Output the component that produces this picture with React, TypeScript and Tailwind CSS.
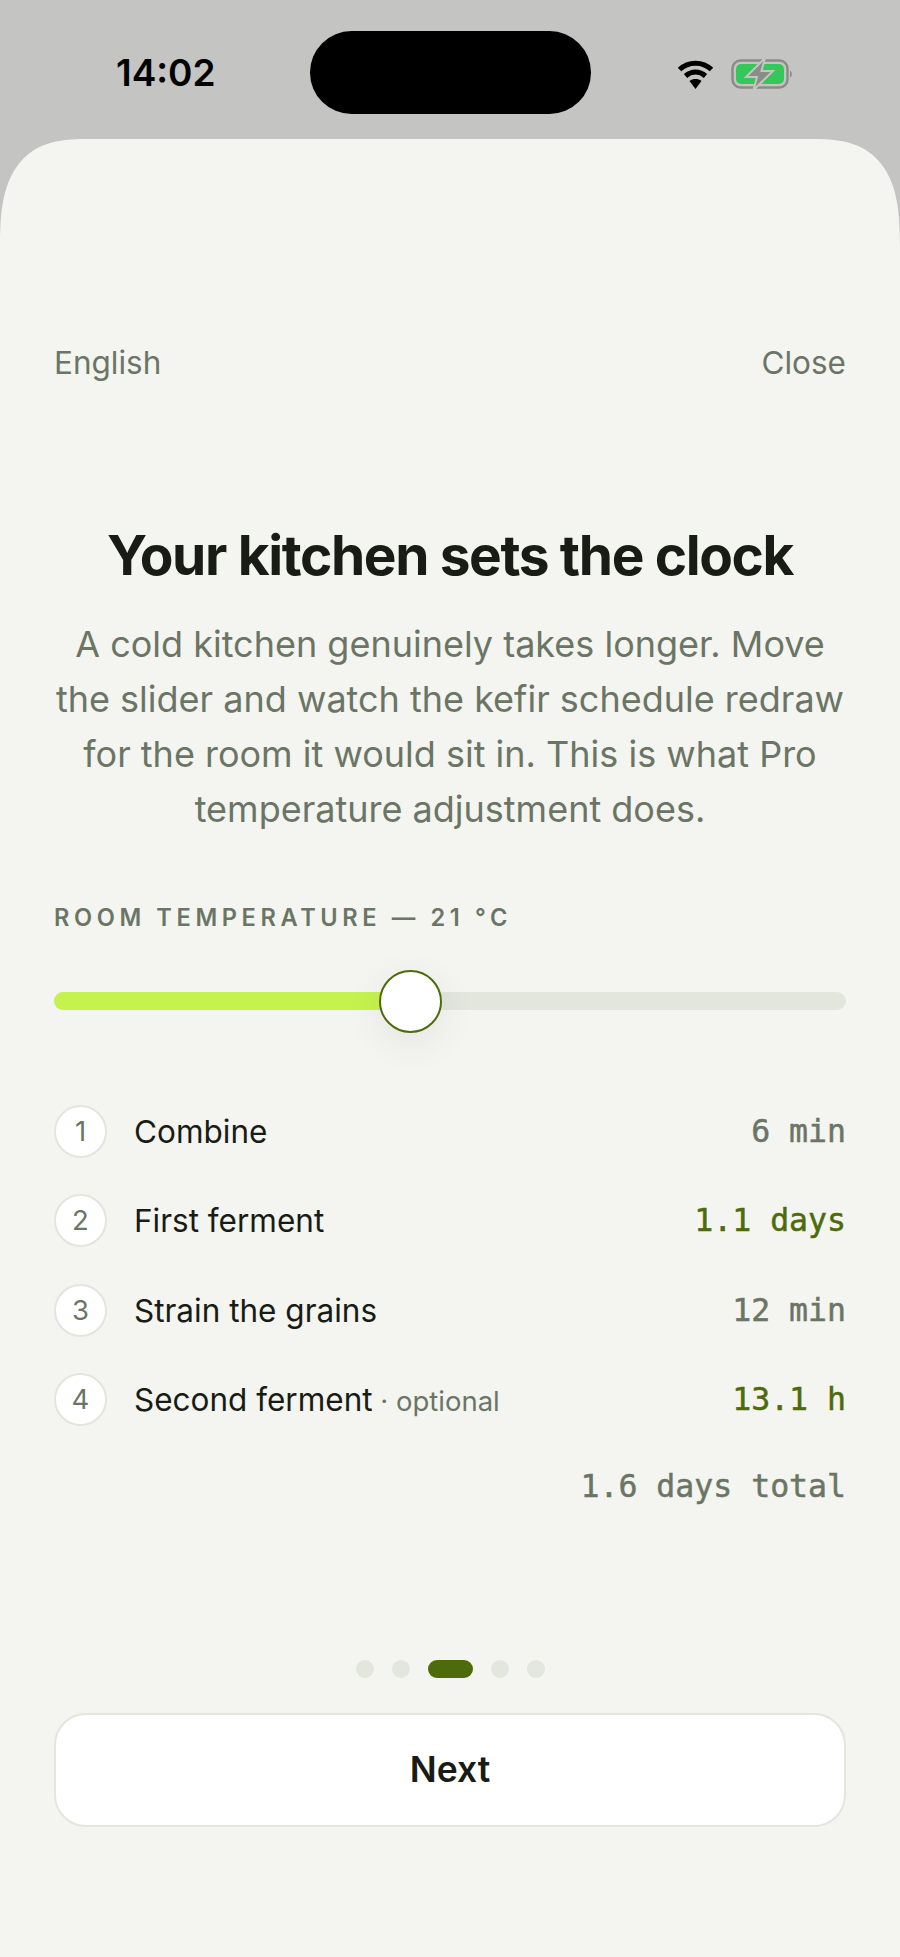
const steps = [
  { n: 1, label: "Combine", time: "6 min", green: false },
  { n: 2, label: "First ferment", time: "1.1 days", green: true },
  { n: 3, label: "Strain the grains", time: "12 min", green: false },
  { n: 4, label: "Second ferment", note: "· optional", time: "13.1 h", green: true },
];

export default function App() {
  return (
    <div className="h-[1957px] w-[900px] overflow-hidden bg-[#c4c4c2] font-['Inter',sans-serif]">
      {/* Status bar */}
      <div className="flex h-[139px] items-start">
        <div className="w-[310px] pt-[50px] pl-[116px] text-[37px] leading-[46px] font-semibold text-black">14:02</div>
        <div className="mt-[31px] h-[83px] w-[281px] shrink-0 rounded-[42px] bg-black" />
        <div className="flex items-center gap-[17px] pt-[58px] pl-[86px]">
          <svg width="37" height="30" viewBox="0 0 37 30" fill="none">
            <path d="M2.5 10.5C11.5 2 25.5 2 34.5 10.5" stroke="#000" strokeWidth="5" />
            <path d="M8.5 17C14.5 11.8 22.5 11.8 28.5 17" stroke="#000" strokeWidth="5" />
            <path d="M12.5 22C16 19.4 21 19.4 24.5 22L18.5 30Z" fill="#000" />
          </svg>
          <svg width="62" height="32" viewBox="0 0 62 32" fill="none">
            <rect x="1.5" y="2.5" width="55" height="27" rx="8" stroke="#8b8c88" strokeWidth="2.5" />
            <rect x="5" y="6" width="48" height="20" rx="5" fill="#34c759" />
            <path d="M59 12.5C61.5 13.5 61.5 18.5 59 19.5Z" fill="#8b8c88" />
            <path d="M34 0L15 19H26L22.5 32L42 13H30.5Z" fill="#8b8c88" stroke="#c4c4c2" strokeWidth="2" />
          </svg>
        </div>
      </div>

      {/* Sheet */}
      <div className="h-[1818px] rounded-t-[90px_110px] bg-[#f4f5f0] px-[54px] [corner-shape:superellipse(1.5)]">
        <div className="flex justify-between pt-[205px] text-[31.5px] leading-[38px] text-[#6b7565]">
          <span>English</span>
          <span>Close</span>
        </div>

        <h1 className="mt-[141px] text-center text-[55px] leading-[64px] font-bold tracking-[-1.38px] text-[#191c14]">
          Your kitchen sets the clock
        </h1>
        <p className="mt-[30px] text-center text-[36px] leading-[55px] text-[#6b7565]">
          A cold kitchen genuinely takes longer. Move the slider and watch the kefir schedule redraw for the room it
          would sit in. This is what Pro temperature adjustment does.
        </p>

        <div className="mt-[67px] text-[23.6px] leading-[28px] font-semibold tracking-[4.6px] text-[#6b7565]">
          ROOM TEMPERATURE — 21 °C
        </div>

        {/* Slider */}
        <div className="relative mt-[60px] h-[18px] rounded-full bg-[#e3e6dc]">
          <div className="h-full w-[356px] rounded-full bg-[#c6f24e]" />
          <div className="absolute top-[-22px] left-[325px] h-[63px] w-[63px] rounded-full border-2 border-[#4d6b0a] bg-white shadow-[0_10px_40px_rgba(25,28,20,0.07)]" />
        </div>

        {/* Steps */}
        <div className="mt-[95px] flex flex-col gap-[37px]">
          {steps.map((s) => (
            <div key={s.n} className="flex h-[52.5px] items-center">
              <div className="flex h-[53px] w-[53px] items-center justify-center rounded-full border-2 border-[#e3e6dc] bg-white text-[27.5px] text-[#6b7565]">
                {s.n}
              </div>
              <div className="ml-[27px] flex-1 text-[31.5px] text-[#191c14]">
                {s.label}
                {s.note && <span className="text-[27.5px] text-[#6b7565]"> {s.note}</span>}
              </div>
              <div
                className={
                  s.green
                    ? "font-['DejaVu_Sans_Mono',monospace] text-[31.5px] text-[#4d6b0a] [-webkit-text-stroke:0.5px_#4d6b0a]"
                    : "font-['DejaVu_Sans_Mono',monospace] text-[31.5px] text-[#6b7565] [-webkit-text-stroke:0.5px_#6b7565]"
                }
              >
                {s.time}
              </div>
            </div>
          ))}
        </div>
        <div className="mt-[41px] text-right font-['DejaVu_Sans_Mono',monospace] text-[31.5px] leading-[38px] text-[#6b7565] [-webkit-text-stroke:0.5px_#6b7565]">
          1.6 days total
        </div>

        {/* Pager */}
        <div className="mt-[155px] flex items-center justify-center gap-[18px]">
          <div className="h-[18px] w-[18px] rounded-full bg-[#e3e6dc]" />
          <div className="h-[18px] w-[18px] rounded-full bg-[#e3e6dc]" />
          <div className="h-[18px] w-[45px] rounded-full bg-[#4d6b0a]" />
          <div className="h-[18px] w-[18px] rounded-full bg-[#e3e6dc]" />
          <div className="h-[18px] w-[18px] rounded-full bg-[#e3e6dc]" />
        </div>

        <div className="mt-[35px] flex h-[114px] items-center justify-center rounded-[32px] border-2 border-[#e3e6dc] bg-white text-[35.5px] font-semibold text-[#191c14]">
          Next
        </div>
      </div>
    </div>
  );
}
